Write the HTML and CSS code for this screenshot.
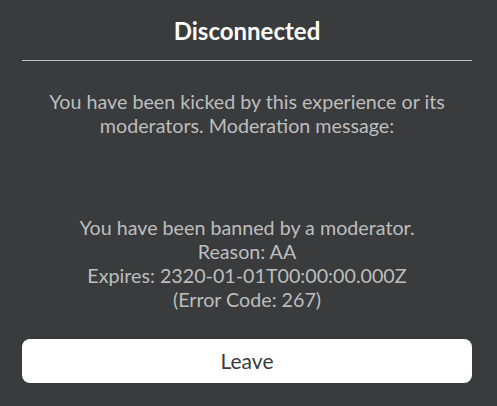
FILE: index.html
```html
<!DOCTYPE html>
<html>
<head>
<meta charset="utf-8">
<link rel="stylesheet" href="styles.css">
</head>
<body>
<div class="dialog">
  <div class="title">Disconnected</div>
  <div class="message">
    <p class="intro">You have been kicked by this experience or its moderators. Moderation message:</p>
    <p class="detail">You have been banned by a moderator.<br>Reason: AA<br>Expires: 2320-01-01T00:00:00.000Z<br>(Error Code: 267)</p>
  </div>
  <button class="leave">Leave</button>
</div>
</body>
</html>
```
FILE: styles.css
```css
html, body {
  margin: 0;
  padding: 0;
  background: #393b3d;
}
.dialog {
  width: 497px;
  height: 406px;
  box-sizing: border-box;
  padding: 0 25px 0 22px;
  display: flex;
  flex-direction: column;
  font-family: Lato, "Noto Sans", sans-serif;
}
.title {
  height: 60px;
  border-bottom: 1px solid #bdbebe;
  color: #ffffff;
  font-weight: bold;
  font-size: 24px;
  line-height: 62px;
  text-align: center;
}
.message {
  color: #bdbebe;
  font-size: 19.7px;
  line-height: 24.3px;
  text-align: center;
  padding: 29px 10px 0;
}
.message p {
  margin: 0;
}
.detail {
  margin-top: 77px !important;
}
.leave {
  margin-top: 26px;
  height: 44px;
  width: 100%;
  border: none;
  border-radius: 8px;
  background: #ffffff;
  color: #393b3d;
  font-family: Lato, "Noto Sans", sans-serif;
  font-size: 21px;
  padding: 0;
}
```
